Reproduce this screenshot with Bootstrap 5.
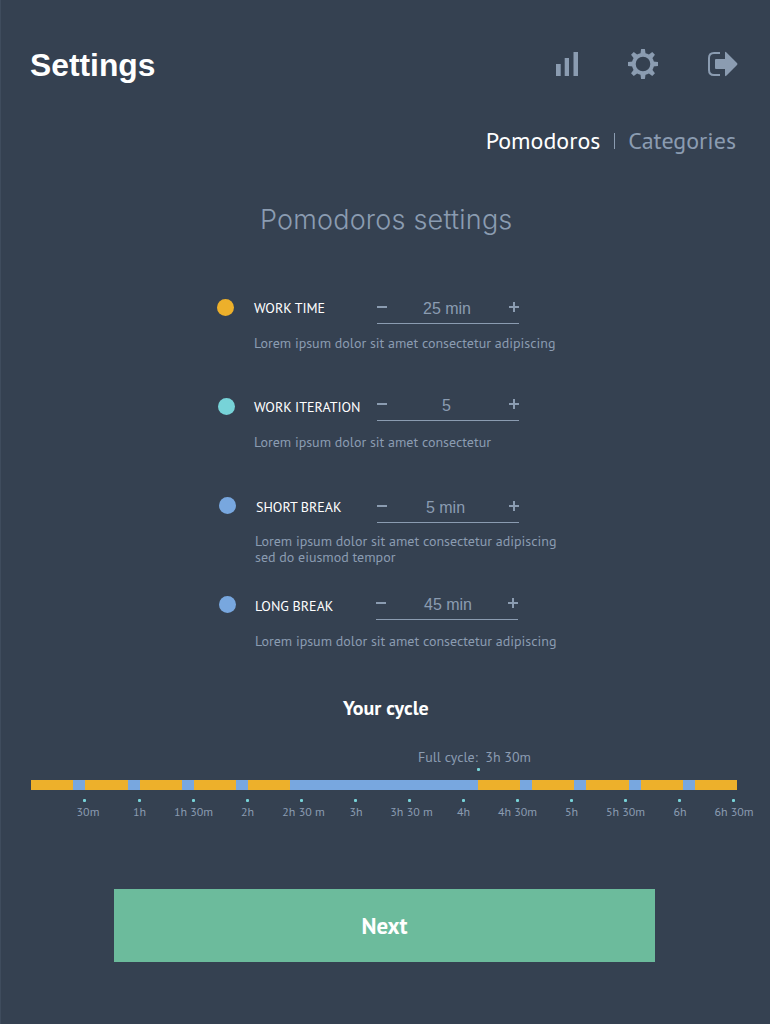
<!DOCTYPE html>
<html lang="en">
<head>
<meta charset="utf-8">
<meta name="viewport" content="width=device-width, initial-scale=1">
<title>Settings</title>
<link rel="stylesheet" href="https://cdn.jsdelivr.net/npm/bootstrap@5.3.0/dist/css/bootstrap.min.css">
<style>
:root { --ink:#354151; --muted:#8b9cb1; --work:#edb02b; --rest:#78a7df; --mint:#77d3d8; }
body { background:var(--ink); color:var(--muted); font-family:"PT Sans","Noto Sans CJK SC",sans-serif; height:1024px; overflow:hidden; }
.screen { width:770px; height:1024px; box-shadow:inset 1px 0 #3f4c5d; }
.topbar { height:100px; padding:0 32px 0 30px; }
.topbar h1 { font:700 31.8px/36px "Liberation Sans",sans-serif; margin:47px 0 0; }
.topbar .tools { padding-top:48px; gap:50px; }
.topbar svg { display:block; }
.tabs { height:60px; padding:24px 34px 0 0; font-size:24px; line-height:34px; }
.tabs a { color:var(--muted); text-decoration:none; }
.tabs a.active { color:#fff; }
.tabs .rule { width:1px; height:16px; background:var(--muted); margin:9px 13px 0 14px; }
.page-title { font:300 27px/36px Inter,sans-serif; letter-spacing:.2px; height:130px; padding:42px 0 0 260px; margin:0; }
.setting { height:99px; padding-left:var(--x,217px); }
.bullet { width:17px; height:17px; border-radius:50%; margin-top:9px; flex:none; }
.setting-body { margin-left:var(--gap,20px); width:320px; flex:none; }
.setting-head { height:42px; }
.setting-name { color:#fff; font-size:14px; line-height:20px; width:var(--name,123px); padding-top:var(--ny,8px); flex:none; white-space:nowrap; }
.stepper { width:142px; height:26px; margin-top:var(--sy,8px); border-bottom:1px solid var(--muted); }
.stepper button { border:0; background:none; padding:0; height:18px; display:flex; align-items:center; }
.stepper output { font:16px/22px "Liberation Sans",sans-serif; padding-right:var(--vx,2px); }
.setting-note { font-size:14px; line-height:16px; margin:var(--dy,3px) 0 0; white-space:nowrap; }
.s2 { --x:218px; --gap:19px; --sy:6px; --vx:3px; }
.s3 { --x:219px; --name:121px; --sy:9px; --ny:9px; --vx:5px; }
.s3 .setting-note { margin-left:-1px; }
.s4 { --x:219px; --gap:19px; --name:121px; --sy:7px; --ny:9px; --dy:4px; --vx:0px; }
.s4 output { padding-left:2px; }
.cycle-title { color:#fff; font-size:20px; font-weight:700; line-height:24px; margin:10px 0 0; padding-left:343px; }
.full { height:22px; line-height:20px; font-size:14px; margin:27px 0 1px 418px; white-space:pre; }
.tick { width:3px; height:3px; background:var(--mint); border-radius:1px; }
.full-tick { margin:-2px 0 9px 477px; }
.track { margin:0 33px 0 31px; height:10px; }
.track i { flex:42.25 0 0; background:var(--work); }
.track i.short { flex-grow:12; background:var(--rest); }
.track i.long { flex-grow:187.5; background:var(--rest); }
.scale { margin:9px 0 0 58px; width:702px; }
.scale > div { width:54px; flex:none; }
.scale > div:first-child .tick { margin-right:2px; }
.scale span { font-size:12px; line-height:14px; margin-top:3px; padding-left:1px; white-space:nowrap; }
.scale .wide { padding-left:5px; }
.scale .late { padding-left:2px; }
.scale .first { padding-left:6px; }
.next { margin:70px 0 0 114px; width:541px; height:73px; background:#6cbb9c; border:0; border-radius:0; color:#fff; font-size:22.8px; font-weight:700; line-height:30px; }
</style>
</head>
<body>
<main class="screen d-flex flex-column">
<header class="topbar d-flex justify-content-between align-items-start">
<h1 class="text-white">Settings</h1>
<nav class="tools d-flex" aria-label="Tools">
<svg width="22" height="32" viewBox="0 0 22 32" fill="#8b9cb1"><path d="M0 16h4.700v12H0zM8.700 10h4.300v18H8.700zM17.500 4H22v24h-4.500z"/></svg>
<svg width="30" height="32" viewBox="0 0 30 32" fill="none" stroke="#8b9cb1"><circle cx="15" cy="16" r="9.200" stroke-width="3.800"/><g fill="#8b9cb1" stroke="none"><path id="tooth" d="M12.400 6 13.100 1h3.800l.7 5z"/><use href="#tooth" transform="rotate(45 15 16)"/><use href="#tooth" transform="rotate(90 15 16)"/><use href="#tooth" transform="rotate(135 15 16)"/><use href="#tooth" transform="rotate(180 15 16)"/><use href="#tooth" transform="rotate(225 15 16)"/><use href="#tooth" transform="rotate(270 15 16)"/><use href="#tooth" transform="rotate(315 15 16)"/></g></svg>
<svg width="30" height="32" viewBox="0 0 30 32"><path d="M12 5H6Q1 5 1 10v12q0 5 5 5h6" fill="none" stroke="#8b9cb1" stroke-width="2"/><path d="M8 11h9V5q0-2 1.500-.5L29 15q1 1 0 2L18.500 27.500Q17 29 17 27v-6H8q-1 0-1-1v-8q0-1 1-1z" fill="#8b9cb1"/></svg>
</nav>
</header>
<nav class="tabs d-flex justify-content-end"><a class="active" href="#">Pomodoros</a><span class="rule"></span><a href="#">Categories</a></nav>
<h2 class="page-title">Pomodoros settings</h2>
<section class="settings">
<div class="setting d-flex"><span class="bullet" style="background:#edb02b"></span><div class="setting-body"><div class="setting-head d-flex"><span class="setting-name">WORK TIME</span><div class="stepper d-flex justify-content-between"><button aria-label="Less"><svg width="10" height="10" fill="#8b9cb1"><path d="M0 4h10v2H0z"/></svg></button><output>25 min</output><button aria-label="More"><svg width="10" height="10" fill="#8b9cb1"><path d="M0 4h4V0h2v4h4v2H6v4H4V6H0z"/></svg></button></div></div><p class="setting-note">Lorem ipsum dolor sit amet consectetur adipiscing</p></div></div>
<div class="setting s2 d-flex"><span class="bullet" style="background:#77d3d8"></span><div class="setting-body"><div class="setting-head d-flex"><span class="setting-name">WORK ITERATION</span><div class="stepper d-flex justify-content-between"><button aria-label="Less"><svg width="10" height="10" fill="#8b9cb1"><path d="M0 4h10v2H0z"/></svg></button><output>5</output><button aria-label="More"><svg width="10" height="10" fill="#8b9cb1"><path d="M0 4h4V0h2v4h4v2H6v4H4V6H0z"/></svg></button></div></div><p class="setting-note">Lorem ipsum dolor sit amet consectetur</p></div></div>
<div class="setting s3 d-flex"><span class="bullet" style="background:#78a7df"></span><div class="setting-body"><div class="setting-head d-flex"><span class="setting-name">SHORT BREAK</span><div class="stepper d-flex justify-content-between"><button aria-label="Less"><svg width="10" height="10" fill="#8b9cb1"><path d="M0 4h10v2H0z"/></svg></button><output>5 min</output><button aria-label="More"><svg width="10" height="10" fill="#8b9cb1"><path d="M0 4h4V0h2v4h4v2H6v4H4V6H0z"/></svg></button></div></div><p class="setting-note">Lorem ipsum dolor sit amet consectetur adipiscing<br>sed do eiusmod tempor</p></div></div>
<div class="setting s4 d-flex"><span class="bullet" style="background:#78a7df"></span><div class="setting-body"><div class="setting-head d-flex"><span class="setting-name">LONG BREAK</span><div class="stepper d-flex justify-content-between"><button aria-label="Less"><svg width="10" height="10" fill="#8b9cb1"><path d="M0 4h10v2H0z"/></svg></button><output>45 min</output><button aria-label="More"><svg width="10" height="10" fill="#8b9cb1"><path d="M0 4h4V0h2v4h4v2H6v4H4V6H0z"/></svg></button></div></div><p class="setting-note">Lorem ipsum dolor sit amet consectetur adipiscing</p></div></div>
</section>
<section>
<h3 class="cycle-title">Your cycle</h3>
<div class="full">Full cycle:  3h 30m</div>
<div class="tick full-tick"></div>
<div class="track d-flex"><i></i><i class="short"></i><i></i><i class="short"></i><i></i><i class="short"></i><i></i><i class="short"></i><i></i><i class="long"></i><i></i><i class="short"></i><i></i><i class="short"></i><i></i><i class="short"></i><i></i><i class="short"></i><i></i></div>
<div class="scale d-flex">
<div class="d-flex flex-column align-items-center"><b class="tick"></b><span class="first">30m</span></div>
<div class="d-flex flex-column align-items-center"><b class="tick"></b><span>1h</span></div>
<div class="d-flex flex-column align-items-center"><b class="tick"></b><span>1h 30m</span></div>
<div class="d-flex flex-column align-items-center"><b class="tick"></b><span>2h</span></div>
<div class="d-flex flex-column align-items-center"><b class="tick"></b><span class="wide">2h 30 m</span></div>
<div class="d-flex flex-column align-items-center"><b class="tick"></b><span class="late">3h</span></div>
<div class="d-flex flex-column align-items-center"><b class="tick"></b><span class="wide">3h 30 m</span></div>
<div class="d-flex flex-column align-items-center"><b class="tick"></b><span>4h</span></div>
<div class="d-flex flex-column align-items-center"><b class="tick"></b><span>4h 30m</span></div>
<div class="d-flex flex-column align-items-center"><b class="tick"></b><span>5h</span></div>
<div class="d-flex flex-column align-items-center"><b class="tick"></b><span>5h 30m</span></div>
<div class="d-flex flex-column align-items-center"><b class="tick"></b><span class="late">6h</span></div>
<div class="d-flex flex-column align-items-center"><b class="tick"></b><span class="late">6h 30m</span></div>
</div>
</section>
<button class="btn next">Next</button>
</main>
<script src="https://cdn.jsdelivr.net/npm/bootstrap@5.3.0/dist/js/bootstrap.bundle.min.js"></script>
</body>
</html>
